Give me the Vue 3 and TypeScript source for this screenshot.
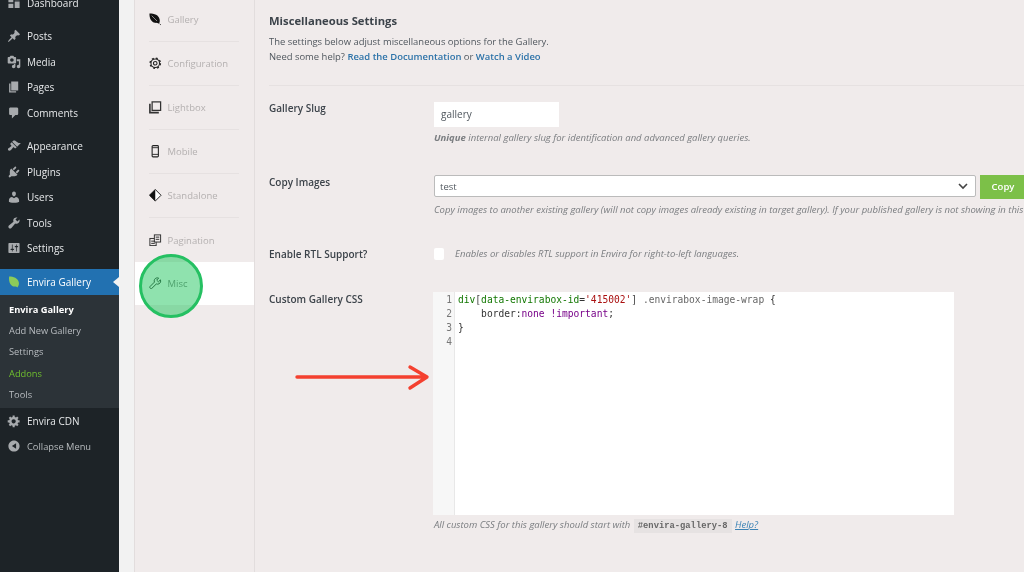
<script setup lang="ts">
interface MenuItem { label: string; icon: string; gap?: boolean }

const icons: Record<string, string> = {
  dashboard: 'M2 3h7v6H2zM11 3h7v3h-7zM2 11h7v6H2zM11 8h7v9h-7z',
  post: 'M10.44 3.02l1.82-1.82 6.36 6.35-1.83 1.82c-1.05-.68-2.48-.57-3.41.36l-.75.75c-.92.93-1.04 2.35-.35 3.41l-1.83 1.82-2.41-2.41-2.8 2.79c-.42.42-3.38 2.71-3.8 2.29s1.86-3.39 2.28-3.81l2.79-2.79L4.1 9.36l1.83-1.82c1.05.69 2.48.57 3.4-.36l.75-.75c.93-.92 1.05-2.35.36-3.41z',
  media: 'M13 11V4c0-.55-.45-1-1-1h-1.67L9 1H5L3.67 3H2c-.55 0-1 .45-1 1v7c0 .55.45 1 1 1h10c.55 0 1-.45 1-1zM7 4.500c1.380 0 2.500 1.120 2.500 2.500S8.380 9.500 7 9.500 4.500 8.380 4.500 7 5.620 4.500 7 4.500zM14 6h5v10.500c0 1.380-1.120 2.500-2.500 2.500S14 17.880 14 16.500s1.120-2.500 2.500-2.500c.17 0 .34.02.5.05V9h-3V6zm-4 8.050V13h2v3.500c0 1.380-1.120 2.500-2.500 2.500S7 17.880 7 16.500 8.120 14 9.500 14c.17 0 .34.02.5.05z',
  page: 'M6 15V2h10v13H6zm-1 1h8v2H3V5h2v11z',
  comments: 'M5 2h9c1.100 0 2 .9 2 2v7c0 1.100-.9 2-2 2h-2l-5 5v-5H5c-1.100 0-2-.9-2-2V4c0-1.100.9-2 2-2z',
  appearance: 'M14.480 11.060L7.410 3.990l1.500-1.500c.5-.56 2.300-.47 3.510.32 1.210.8 1.430 1.280 2.910 2.100 1.180.64 2.450 1.260 4.450.85zm-.71.71L6.700 4.700 4.930 6.470c-.39.39-.39 1.020 0 1.410l1.060 1.060c.39.39.39 1.030 0 1.420-.6.6-1.430 1.110-2.210 1.690-.35.26-.7.53-1.010.84C1.430 13.230.91 15.240 1.840 16.170s2.940.41 4.280-.93c.31-.31.58-.66.85-1.010.57-.78 1.080-1.610 1.690-2.210.39-.39 1.020-.39 1.410 0l1.060 1.060c.39.39 1.020.39 1.410 0z',
  plugins: 'M13.110 4.360L9.870 7.600 8 5.730l3.240-3.240c.35-.34 1.050-.2 1.560.32.52.51.66 1.210.31 1.550zm-8 1.770l.91-1.120 9.010 9.010-1.190.84c-.71.71-2.630 1.160-3.820 1.160H6.140L4.900 17.260c-.59.59-1.540.59-2.120 0-.59-.58-.59-1.530 0-2.120l1.240-1.240v-3.880c0-1.130.4-3.190 1.090-3.890zm7.260 3.970l3.240-3.240c.34-.35 1.040-.21 1.550.31.52.51.66 1.210.31 1.550l-3.240 3.250z',
  users: 'M10 9.250c-2.270 0-2.730-3.440-2.730-3.440C7 4.020 7.820 2 9.970 2c2.160 0 2.980 2.020 2.710 3.810 0 0-.41 3.440-2.680 3.440zm0 2.570L12.720 10c2.390 0 4.520 2.330 4.520 4.530v2.490s-3.650 1.130-7.240 1.130c-3.650 0-7.240-1.130-7.240-1.130v-2.490c0-2.250 1.940-4.480 4.470-4.480z',
  tools: 'M16.680 9.770c-1.340 1.340-3.300 1.670-4.950.99l-5.410 6.520c-.99.99-2.590.99-3.580 0s-.99-2.590 0-3.570l6.520-5.420c-.68-1.650-.35-3.610.99-4.950 1.280-1.280 3.120-1.620 4.720-1.060l-2.890 2.890 2.820 2.820 2.860-2.870c.53 1.580.18 3.390-1.080 4.650z',
  settings: 'M18 16V4c0-.55-.45-1-1-1H3c-.55 0-1 .45-1 1v12c0 .55.45 1 1 1h14c.55 0 1-.45 1-1zM8 11h1c.55 0 1 .45 1 1s-.45 1-1 1H8v1.500c0 .28-.22.5-.5.5s-.5-.22-.5-.5V13H6c-.55 0-1-.45-1-1s.45-1 1-1h1V5.500c0-.28.22-.5.5-.5s.5.22.5.5V11zm5-2h-1c-.55 0-1-.45-1-1s.45-1 1-1h1V5.500c0-.28.22-.5.5-.5s.5.22.5.5V7h1c.55 0 1 .45 1 1s-.45 1-1 1h-1v5.500c0 .28-.22.5-.5.5s-.5-.22-.5-.5V9z',
  gear: 'M18 12h-2.180c-.17.7-.44 1.350-.81 1.930l1.540 1.540-2.100 2.100-1.540-1.540c-.58.36-1.230.64-1.910.81V19H8v-2.180c-.68-.17-1.330-.45-1.910-.81l-1.540 1.540-2.120-2.120 1.540-1.540c-.36-.58-.64-1.230-.81-1.910H1V9.020h2.170c.17-.68.44-1.330.81-1.920L2.430 5.560l2.120-2.120 1.540 1.540c.58-.36 1.230-.64 1.910-.81V2h3v2.180c.68.17 1.330.44 1.910.81l1.540-1.540 2.120 2.120-1.540 1.540c.36.58.64 1.230.81 1.910H18V12zm-8.500 1.500c1.660 0 3-1.340 3-3s-1.340-3-3-3-3 1.340-3 3 1.340 3 3 3z',
  collapse: 'M10 2c4.420 0 8 3.580 8 8s-3.580 8-8 8-8-3.580-8-8 3.580-8 8-8zm3 12V6l-6 4z',
  leaf: 'M3 2c6 0 13 2 14 9 .4 3-1 5-2 7-1-1-2-1.500-4-1.500C6 16.500 2 11 3 2z',
}

const topMenu: MenuItem[] = [
  { label: 'Dashboard', icon: 'dashboard' },
  { label: 'Posts', icon: 'post', gap: true },
  { label: 'Media', icon: 'media' },
  { label: 'Pages', icon: 'page' },
  { label: 'Comments', icon: 'comments' },
  { label: 'Appearance', icon: 'appearance', gap: true },
  { label: 'Plugins', icon: 'plugins' },
  { label: 'Users', icon: 'users' },
  { label: 'Tools', icon: 'tools' },
  { label: 'Settings', icon: 'settings' },
]

const subMenu = [
  { label: 'Envira Gallery', cls: 'sub-current' },
  { label: 'Add New Gallery', cls: '' },
  { label: 'Settings', cls: '' },
  { label: 'Addons', cls: 'sub-green' },
  { label: 'Tools', cls: '' },
]

const tabs = ['Gallery', 'Configuration', 'Lightbox', 'Mobile', 'Standalone', 'Pagination', 'Misc']
</script>

<template>
  <div class="page">
    <aside class="sidebar">
      <div v-for="item in topMenu" :key="item.label" class="menu-row" :class="{ gapped: item.gap }">
        <svg class="menu-icon" viewBox="0 0 20 20"><path :d="icons[item.icon]" /></svg>
        <span>{{ item.label }}</span>
      </div>
      <div class="menu-row active">
        <svg class="menu-icon leaf" viewBox="0 0 20 20"><path :d="icons.leaf" /></svg>
        <span>Envira Gallery</span>
        <i class="active-tip"></i>
      </div>
      <div class="submenu">
        <div v-for="s in subMenu" :key="s.label" class="sub-row" :class="s.cls">{{ s.label }}</div>
      </div>
      <div class="menu-row cdn">
        <svg class="menu-icon" viewBox="0 0 20 20"><path :d="icons.gear" /></svg>
        <span>Envira CDN</span>
      </div>
      <div class="menu-row collapse">
        <svg class="menu-icon" viewBox="0 0 20 20"><path :d="icons.collapse" /></svg>
        <span>Collapse Menu</span>
      </div>
    </aside>

    <div class="gutter"></div>

    <nav class="tabs">
      <div v-for="t in tabs" :key="t" class="tab" :class="{ 'tab-active': t === 'Misc' }">
        <span class="tab-inner">
          <svg v-if="t === 'Gallery'" class="tab-icon" viewBox="0 0 14 14"><path d="M.5.5c5.500 0 10.500 1.500 11.500 7 .3 1.800-.2 3.300-.8 4.500C10 11.200 8.500 11.300 6.800 11 2.500 10 .4 6 .5.500z" fill="#111" /><path d="M12 12.200l1.200 1" stroke="#111" fill="none" /><path d="M3 3l6 6" stroke="#f0ebeb" stroke-width=".6" /></svg>
          <svg v-else-if="t === 'Configuration'" class="tab-icon" viewBox="0 0 14 14" fill="none" stroke="#222"><circle cx="7" cy="7" r="4.800" stroke-width="1.200" /><circle cx="7" cy="7" r="5.800" stroke-width="1.500" stroke-dasharray="2.200 2.350" /><circle cx="7" cy="7" r="2" stroke-width="1.200" /></svg>
          <svg v-else-if="t === 'Lightbox'" class="tab-icon" viewBox="0 0 14 14" fill="none" stroke="#333"><rect x="3.500" y="1" width="9.500" height="9.500" stroke-width="1.400" /><path d="M1 3v10h10" stroke-width="1.800" /></svg>
          <svg v-else-if="t === 'Mobile'" class="tab-icon" viewBox="0 0 14 14" fill="none" stroke="#222"><rect x="3.500" y=".7" width="7" height="12.600" rx="1" stroke-width="1.200" /><path d="M3.500 3h7M3.500 10.500h7" stroke-width="1" /></svg>
          <svg v-else-if="t === 'Standalone'" class="tab-icon" viewBox="0 0 14 14"><path d="M7 .5L13.500 7 7 13.500.5 7z" fill="#fff" stroke="#111" /><path d="M7 .5V13.500L.5 7z" fill="#111" /></svg>
          <svg v-else-if="t === 'Pagination'" class="tab-icon" viewBox="0 0 14 14" fill="none" stroke="#333" stroke-width="1.100"><rect x="1" y="5" width="7" height="8" fill="#f0ebeb" /><rect x="6" y="1" width="7" height="8" fill="#f0ebeb" /><path d="M2.500 8h4M2.500 10.500h4M7.500 3.500h4M7.500 6h4" /></svg>
          <svg v-else class="tab-icon" viewBox="0 0 14 14" fill="none" stroke="#222" stroke-width="1.100"><path d="M12.800 3.200l-2.300 2.200-1.900-1.900L10.800 1.200C9 .5 7 1.200 6.200 2.800c-.5 1-.5 2-.1 2.900L1.400 10.400c-.7.7-.7 1.500-.1 2.100s1.500.6 2.100 0l4.800-4.700c1 .4 2 .3 3-.2 1.600-.8 2.300-2.600 1.600-4.400z" /></svg>
          <span>{{ t }}</span>
        </span>
      </div>
    </nav>

    <main class="main">
      <h2 class="title">Miscellaneous Settings</h2>
      <p class="desc">The settings below adjust miscellaneous options for the Gallery.<br />Need some help? <a class="strong-link">Read the Documentation</a> or <a class="strong-link">Watch a Video</a></p>
      <hr class="rule" />

      <section class="row slug-row">
        <label class="label">Gallery Slug</label>
        <div>
          <div class="text-input">gallery</div>
          <p class="hint"><b>Unique</b> internal gallery slug for identification and advanced gallery queries.</p>
        </div>
      </section>

      <section class="row copy-row">
        <label class="label">Copy Images</label>
        <div>
          <div class="select-line">
            <div class="select">
              <span>test</span>
              <svg width="10" height="7" viewBox="0 0 10 7" fill="none" stroke="#444" stroke-width="1.600"><path d="M1 1l4 4 4-4" /></svg>
            </div>
            <div class="copy-btn">Copy</div>
          </div>
          <p class="hint">Copy images to another existing gallery (will not copy images already existing in target gallery). If your published gallery is not showing in this list, make sure it is published first.</p>
        </div>
      </section>

      <section class="row rtl-row">
        <label class="label">Enable RTL Support?</label>
        <div class="rtl-line">
          <span class="checkbox"></span>
          <p class="hint inline">Enables or disables RTL support in Envira for right-to-left languages.</p>
        </div>
      </section>

      <section class="row css-row">
        <label class="label">Custom Gallery CSS</label>
        <div>
          <div class="editor">
            <div class="line-nums"><div>1</div><div>2</div><div>3</div><div>4</div></div>
            <pre class="code"><span class="c-tag">div</span><span class="c-br">[</span><span class="c-attr">data-envirabox-id</span>=<span class="c-str">'415002'</span><span class="c-br">]</span> <span class="c-cls">.envirabox-image-wrap</span> {
    border:<span class="c-kw">none</span> <span class="c-kw">!important</span>;
}
</pre>
          </div>
          <p class="hint foot">All custom CSS for this gallery should start with <code class="chip">#envira-gallery-8</code> <a class="help">Help?</a></p>
        </div>
      </section>
    </main>

    <div class="circle"></div>
    <svg class="arrow" width="140" height="30" viewBox="0 0 140 30" fill="none" stroke="#f4402f" stroke-width="3.400" stroke-linecap="round" stroke-linejoin="round">
      <path d="M2 15h130M115 5l17 10-17 11" />
    </svg>
  </div>
</template>

<style scoped>
.page {
  position: relative;
  display: flex;
  width: 1024px;
  height: 572px;
  overflow: hidden;
  background: #f0ebeb;
  font-family: "Open Sans", sans-serif;
  color: #50575e;
  filter: blur(0.4px);
}
.sidebar {
  flex: 0 0 119px;
  background: #1d2327;
  color: #e6e8ea;
  font-size: 10px;
  margin-top: -9px;
  height: 581px;
}
.menu-row {
  position: relative;
  display: flex;
  align-items: center;
  height: 25.5px;
  padding-left: 7px;
  gap: 6px;
  box-sizing: border-box;
}
.menu-row:first-child { margin-top: -1px; }
.menu-row.gapped { margin-top: 8px; }
.menu-icon { width: 14px; height: 14px; flex: none; fill: #a7aaad; }
.menu-row.active {
  margin-top: 8px;
  height: 26px;
  background: #2271b1;
  color: #fff;
}
.menu-icon.leaf { fill: #8ccb5a; }
.active-tip {
  position: absolute;
  right: 0;
  top: 8px;
  border: 5px solid transparent;
  border-right: 6px solid #f2f2f2;
  border-left: 0;
}
.submenu {
  background: #2c3338;
  height: 113px;
  padding-top: 4px;
  box-sizing: border-box;
  font-size: 9.3px;
  color: #b8bcc0;
}
.sub-row { height: 21.2px; line-height: 21.2px; padding-left: 9px; }
.sub-current { color: #fff; font-weight: 700; }
.sub-green { color: #6fbf2e; }
.collapse { color: #b6babd; font-size: 9.3px; }
.gutter { flex: 0 0 15px; background: #f2f2f2; }
.tabs {
  flex: 0 0 121px;
  box-sizing: border-box;
  margin-top: -2px;
  height: 574px;
  border-left: 1px solid #e2dddd;
  border-right: 1px solid #e2dddd;
  background: #f0ebeb;
  font-size: 9.5px;
  color: #b4b0b0;
}
.tab { height: 44px; padding: 0 15px 0 14px; box-sizing: border-box; }
.tab-inner {
  display: flex;
  align-items: center;
  gap: 6px;
  height: 44px;
  box-sizing: border-box;
  border-bottom: 1px solid #e6e1e1;
}
.tab:nth-child(6) .tab-inner { border-bottom: 0; }
.tab-active { background: #fff; height: 43px; color: #777; }
.tab-active .tab-inner { border-bottom: 0; height: 43px; }
.tab-icon { width: 12.5px; height: 12.5px; flex: none; }
.main {
  flex: 1;
  min-width: 0;
  padding-left: 14px;
  overflow: hidden;
  font-size: 9.45px;
}
.title {
  margin: 13px 0 0;
  font-size: 11.25px;
  line-height: 16px;
  font-weight: 700;
  color: #3c434a;
}
.desc { margin: 5px 0 0; line-height: 15px; white-space: nowrap; }
.strong-link { font-weight: 600; color: #2c72a8; }
.rule { border: 0; border-top: 1px solid #e6e1e1; margin: 21px 0 0; }
.row { display: grid; grid-template-columns: 165px 1fr; }
.label { display: block; font-weight: 600; font-size: 10px; line-height: 14px; color: #3c434a; }
.slug-row { margin-top: 16px; }
.slug-row .label { margin-top: -1px; }
.text-input {
  width: 125px;
  height: 25px;
  line-height: 25px;
  background: #fff;
  padding-left: 7px;
  box-sizing: border-box;
  font-size: 10px;
}
.hint {
  margin: 4px 0 0;
  font-style: italic;
  font-size: 9.5px;
  line-height: 14px;
  color: #7a7d80;
  white-space: nowrap;
}
.hint b { font-weight: 700; }
.copy-row { margin-top: 30px; }
.select-line { display: flex; gap: 4px; }
.select {
  flex: 0 0 542px;
  height: 22px;
  box-sizing: border-box;
  background: #fff;
  border: 1.5px solid #bbb;
  border-radius: 2px;
  padding: 0 7px 0 5px;
  display: flex;
  align-items: center;
  justify-content: space-between;
  font-size: 9.5px;
}
.copy-btn {
  flex: 0 0 54px;
  height: 24px;
  line-height: 24px;
  background: #7cc048;
  color: #fff;
  font-weight: 600;
  text-align: center;
  font-size: 9.5px;
  padding-right: 8px;
  box-sizing: border-box;
}
.rtl-row { margin-top: 31px; }
.rtl-row .label { margin-top: -1px; }
.rtl-line { display: flex; align-items: center; gap: 11px; height: 12px; }
.checkbox { flex: none; width: 10px; height: 12px; background: #fff; border-radius: 2px; }
.hint.inline { margin: 0; }
.css-row { margin-top: 31px; }
.editor { display: flex; width: 521px; height: 223px; background: #fff; margin-left: -1px; }
.line-nums {
  flex: 0 0 22px;
  background: #f7f7f7;
  border-right: 1px solid #e8e8e8;
  box-sizing: border-box;
  padding: 1px 2px 0 0;
  text-align: right;
  font-family: "DejaVu Sans Mono", monospace;
  font-size: 9.6px;
  line-height: 14px;
  color: #777;
}
.code {
  margin: 0;
  padding: 1px 0 0 3px;
  font-family: "DejaVu Sans Mono", monospace;
  font-size: 9.6px;
  line-height: 14px;
  color: #333;
}
.c-tag { color: #117700; }
.c-attr { color: #117700; }
.c-br { color: #444; }
.c-str { color: #aa1111; }
.c-cls { color: #666; }
.c-kw { color: #770088; }
.foot { margin-top: 3px; }
.chip {
  display: inline-block;
  background: #e6e2e2;
  padding: 0 4px;
  margin: 0 1px;
  font-family: "Liberation Mono", monospace;
  font-style: normal;
  font-size: 8.8px;
  font-weight: 700;
  color: #666;
}
.help { color: #3b82b5; text-decoration: underline; }
.circle {
  position: absolute;
  left: 139px;
  top: 254px;
  width: 64px;
  height: 64px;
  box-sizing: border-box;
  border-radius: 50%;
  border: 3px solid #25c062;
  background: rgba(40, 200, 100, 0.52);
}
.arrow { position: absolute; left: 295px; top: 362px; }
</style>
